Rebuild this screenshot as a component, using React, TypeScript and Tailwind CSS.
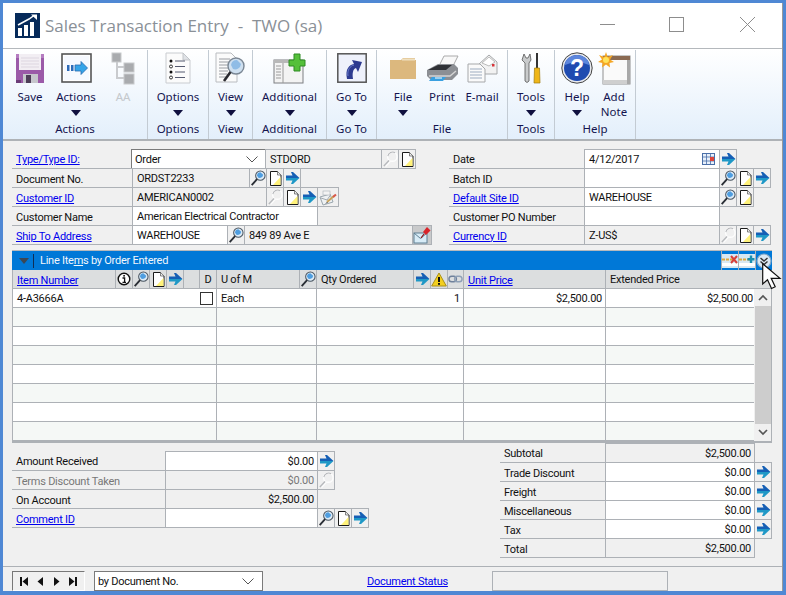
import React from "react";

const FORM = "font-['Roboto',sans-serif] text-[11px] tracking-[-0.25px] leading-none text-[#111]";
const LINE = "border-[#adb1b6]";

function Lookup({ off }: { off?: boolean }) {
  if (off)
    return (
      <svg width="17" height="18" viewBox="0 0 17 18">
        <circle cx="11" cy="6.5" r="5" fill="none" stroke="#fdfdfd" strokeWidth="1.6" />
        <path d="M6.2 6 A5 5 0 0 1 14 2.5" fill="none" stroke="#b4b6b9" strokeWidth="1.1" />
        <path d="M7.5 10.5 L2 16.5" stroke="#b8babd" strokeWidth="1.6" />
        <path d="M8.8 11.5 L3.8 17" stroke="#fdfdfd" strokeWidth="1.2" />
      </svg>
    );
  return (
    <svg width="17" height="18" viewBox="0 0 17 18">
      <circle cx="11" cy="6.5" r="5" fill="#dcebf7" stroke="#4a5560" strokeWidth="1.1" />
      <path d="M7.5 6 A3.6 3.6 0 0 1 11 3 L14 5.5 A3.8 3.8 0 0 1 8.5 8.5Z" fill="#4f9ee0" />
      <path d="M7.5 10.2 L1.8 16.5" stroke="#2a2e35" strokeWidth="2" />
    </svg>
  );
}
function Note() {
  return (
    <svg width="15" height="17" viewBox="0 0 15 17">
      <path d="M2.5 1.5 H9.5 L13 5 V15.5 H2.5Z" fill="#fff" stroke="#1a1a1a" />
      <path d="M12.5 7 V15 H5 Z" fill="#fff27a" />
      <path d="M9.5 1.5 V5 H13" fill="#eee" stroke="#555" strokeWidth=".7" />
    </svg>
  );
}
function Arrow() {
  return (
    <svg width="15" height="14" viewBox="0 0 15 14">
      <path d="M1 4.5 H7.5 L6 1 H8 L14.5 7 H1Z" fill="#155fb5" />
      <path d="M1 7 H14.5 L8 13 H6 L7.5 9.5 H1Z" fill="#1f98c6" />
    </svg>
  );
}
function Info() {
  return (
    <svg width="14" height="14" viewBox="0 0 14 14">
      <circle cx="7" cy="7" r="5.8" fill="#fff" stroke="#111" strokeWidth="1.4" />
      <path d="M5.5 6 H7.6 V10 M5.5 10.3 H9" stroke="#111" strokeWidth="1.3" fill="none" />
      <rect x="6.3" y="3" width="1.6" height="1.6" fill="#111" />
    </svg>
  );
}
function Warn() {
  return (
    <svg width="16" height="15" viewBox="0 0 16 15">
      <path d="M8 1 L15.3 14 H.7Z" fill="#f3cf1f" stroke="#a98f1a" />
      <rect x="7" y="5" width="2" height="5" fill="#111" />
      <rect x="7" y="11" width="2" height="1.8" fill="#111" />
    </svg>
  );
}
function Link() {
  return (
    <svg width="16" height="10" viewBox="0 0 16 10">
      <rect x="1" y="2" width="8" height="6" rx="3" fill="none" stroke="#6f819b" strokeWidth="1.5" />
      <rect x="7" y="2" width="8" height="6" rx="3" fill="none" stroke="#8fa0b6" strokeWidth="1.5" />
    </svg>
  );
}
function Chevron({ up }: { up?: boolean }) {
  return (
    <svg width="10" height="7" viewBox="0 0 10 7">
      <path d={up ? "M1 6 L5 2 L9 6" : "M1 1 L5 5 L9 1"} fill="none" stroke="#555" strokeWidth="1.7" />
    </svg>
  );
}
function ComboChevron() {
  return (
    <svg width="12" height="7" viewBox="0 0 12 7">
      <path d="M.5 .5 L6 6 L11.5 .5" fill="none" stroke="#555" strokeWidth="1" />
    </svg>
  );
}
function Mail() {
  return (
    <svg width="19" height="17" viewBox="0 0 19 17">
      <path d="M1 8 L11 5 L14 13 L4 16Z" fill="#eef1f3" stroke="#9aa6ae" />
      <path d="M2 9 L8 11 L11.5 6" fill="none" stroke="#a3aab0" />
      <rect x="4" y="2" width="7" height="4" fill="#f3f3f3" stroke="#aab2b8" strokeWidth=".6" />
      <path d="M8 13 L15 7" stroke="#c9a35a" strokeWidth="2" />
      <path d="M14 8 L17 5.5" stroke="#d8584c" strokeWidth="2.2" />
      <path d="M7 14.5 L8.5 13" stroke="#444" strokeWidth="1" />
    </svg>
  );
}
function Pin() {
  return (
    <svg width="18" height="19" viewBox="0 0 18 19">
      <rect x="1" y="7" width="13" height="10" fill="#d8ecf7" stroke="#5f7f93" />
      <path d="M1 7 L7.5 12.5 L14 7" fill="none" stroke="#5f7f93" />
      <path d="M10 6 L14 1 L17.5 4.5 L13 9Z" fill="#d9242a" />
      <path d="M11 8 L8 12" stroke="#8a1616" strokeWidth="1.2" />
    </svg>
  );
}

function Cell({ w, bg = "", children, right, dark }: { w: string; bg?: string; children?: React.ReactNode; right?: boolean; dark?: boolean }) {
  return (
    <div
      className={`${w} ${bg} h-[20px] shrink-0 -mr-px border ${dark ? "border-[#7a7a7a]" : LINE} flex items-center overflow-hidden whitespace-nowrap ${
        right ? "justify-end pr-[3px]" : "pl-[4px]"
      }`}
    >
      {children}
    </div>
  );
}
function Btn({ children, w = "w-[18px]", bg = "" }: { children?: React.ReactNode; w?: string; bg?: string }) {
  return (
    <div className={`${w} ${bg} h-[20px] shrink-0 -mr-px border ${LINE} flex items-center justify-center overflow-hidden`}>{children}</div>
  );
}
function Label({ w, children, link, first, muted }: { w: string; children: React.ReactNode; link?: boolean; first?: boolean; muted?: boolean }) {
  return (
    <div
      className={`${w} h-[20px] shrink-0 ${first ? "border-b" : "border-y"} ${LINE} flex items-center pl-[4px] pt-[2px] whitespace-nowrap ${
        muted ? "text-[#777]" : ""
      }`}
    >
      {link ? <span className="text-[#0000ee] underline">{children}</span> : children}
    </div>
  );
}
const Row = ({ children }: { children: React.ReactNode }) => <div className="flex h-[19px]">{children}</div>;

function RibbonBtn({ w, label, label2, arrow, icon, muted }: { w: string; label: string; label2?: string; arrow?: boolean; icon: React.ReactNode; muted?: boolean }) {
  return (
    <div className={`${w} shrink-0 flex flex-col items-center`}>
      <div className="h-[36px] w-full flex items-center justify-center">{icon}</div>
      <div className={`h-[16px] mt-[3px] leading-[16px] whitespace-nowrap ${muted ? "text-[#c4c8cc]" : ""}`}>{label}</div>
      {label2 && <div className="h-[15px] -mt-[1px] leading-[15px] whitespace-nowrap">{label2}</div>}
      {arrow && (
        <svg className="mt-[5px]" width="10" height="6" viewBox="0 0 10 6">
          <path d="M0 0 H10 L5 6Z" fill="#10103f" />
        </svg>
      )}
    </div>
  );
}
function Group({ w, label, children, pad = "" }: { w: string; label: string; children: React.ReactNode; pad?: string }) {
  return (
    <div className={`${w} shrink-0 h-full border-r border-[#c3cbd3] flex flex-col`}>
      <div className={`h-[71px] flex justify-center ${pad}`}>{children}</div>
      <div className="text-center leading-[16px]">{label}</div>
    </div>
  );
}

const SaveIcon = (
  <svg width="30" height="31" viewBox="0 0 30 31">
    <path d="M1 1 H29 V30 H1Z" fill="#9b5aa8" />
    <rect x="1" y="1" width="28" height="4" fill="#b57cc0" />
    <rect x="4" y="1" width="22" height="16" fill="#f2eef3" />
    <path d="M6 5 H24 M6 8 H24 M6 11 H24 M6 14 H24" stroke="#ddd6e0" />
    <rect x="8" y="21" width="15" height="9" fill="#c6c6cc" />
    <rect x="11" y="22" width="5" height="8" fill="#4d3d57" />
    <rect x="1" y="27" width="5" height="3" fill="#6c3d78" />
  </svg>
);
const ActionsIcon = (
  <svg width="31" height="30" viewBox="0 0 31 30">
    <rect x="1" y="1" width="29" height="28" fill="#fff" stroke="#555" strokeWidth="1.6" />
    <rect x="3" y="3" width="25" height="24" fill="#f6f9ff" />
    <path d="M6 12 H8.5 V18 H6Z M10 12 H12.5 V18 H10Z" fill="#2d6bb8" />
    <path d="M14 12 H20 V8.5 L26.5 15 L20 21.5 V18 H14Z" fill="#35a4e8" stroke="#2a6ab0" strokeWidth=".8" />
  </svg>
);
const AAIcon = (
  <svg width="24" height="33" viewBox="0 0 24 33">
    <path d="M6 8 V26 H14 M6 15 H14" stroke="#c9cbce" strokeWidth="2" fill="none" />
    <rect x="1" y="1" width="9" height="9" fill="#a9abae" stroke="#c8cacc" />
    <rect x="13" y="11" width="10" height="9" fill="#a9abae" stroke="#c8cacc" />
    <rect x="13" y="22" width="10" height="10" fill="#a9abae" stroke="#c8cacc" />
  </svg>
);
const OptionsIcon = (
  <svg width="26" height="32" viewBox="0 0 26 32">
    <path d="M1 1 H18 L25 8 V31 H1Z" fill="#fbfbfb" stroke="#c9ccd0" />
    <path d="M18 1 V8 H25Z" fill="#dfe2e6" stroke="#c2c5c9" />
    <circle cx="6" cy="9" r="1.5" fill="#111" />
    <circle cx="6" cy="14.5" r="1.5" fill="none" stroke="#333" />
    <circle cx="6" cy="20" r="1.5" fill="#111" />
    <circle cx="6" cy="25.5" r="1.5" fill="none" stroke="#333" />
    <path d="M10 9 H20 M10 14.5 H20 M10 20 H20 M10 25.5 H20" stroke="#555a70" strokeWidth="1" />
  </svg>
);
const ViewIcon = (
  <svg width="32" height="33" viewBox="0 0 32 33">
    <path d="M1 1 H16 L22 7 V30 H1Z" fill="#fbfbfb" stroke="#b9bcc0" />
    <path d="M4 7 H15 M4 10 H18 M4 13 H14 M4 16 H13 M4 19 H13 M4 22 H12 M4 25 H12" stroke="#9a9da2" />
    <circle cx="21" cy="14" r="8" fill="#cfe0f0" stroke="#7b8794" strokeWidth="1.4" />
    <path d="M16 13 A6 6 0 0 1 22 8 L26 12 A6 6 0 0 1 18 17Z" fill="#8fbce6" />
    <path d="M15.5 20 L9 29" stroke="#2a2a30" strokeWidth="2.6" />
  </svg>
);
const AdditionalIcon = (
  <svg width="33" height="31" viewBox="0 0 33 31">
    <rect x="1" y="7" width="29" height="23" fill="#f3f3f3" stroke="#7d7f82" />
    <rect x="1" y="7" width="29" height="3" fill="#b8b8b8" />
    <path d="M10 10 V30" stroke="#999" />
    <path d="M3 13 H8 M3 16 H8 M3 19 H8 M3 22 H8 M3 25 H8" stroke="#9b9b9b" />
    <path d="M21 1 H27 V7 H32 V13 H27 V18 H21 V13 H16 V7 H21Z" fill="#55c03a" stroke="#2e8a22" />
  </svg>
);
const GoToIcon = (
  <svg width="30" height="30" viewBox="0 0 30 30">
    <rect x=".8" y=".8" width="28.4" height="28.4" fill="#eef1fb" stroke="#555" strokeWidth="1.5" />
    <path d="M10 26 C8 16 12 12 17 11 L15 7 L25 9 L21 19 L19 15 C16 16 15 20 16 26Z" fill="#2d3a90" />
    <path d="M11 23 C10 17 13 13 17 12" stroke="#6a7ccc" fill="none" />
  </svg>
);
const FileIcon = (
  <svg width="28" height="23" viewBox="0 0 28 23">
    <path d="M1 3 H12 L14 1 H26 V3 H27 V22 H1Z" fill="#dcb87e" />
    <rect x="13" y="1.5" width="13" height="2" fill="#efe0c0" />
  </svg>
);
const PrintIcon = (
  <svg width="33" height="27" viewBox="0 0 33 27">
    <path d="M18 1 H32 L26 13 H12Z" fill="#f8f8f8" stroke="#aaa" />
    <path d="M1 15 L12 9 H28 L32 13 V19 L26 25 H5 L1 21Z" fill="#8c8f94" />
    <path d="M2 15 L12 10 H26 L20 15Z" fill="#2f3136" />
    <path d="M3 21 L24 21 L30 16" stroke="#d4d4d4" fill="none" strokeWidth="1.5" />
    <path d="M6 22 H20 L17 26 H3Z" fill="#3aa0e0" />
    <path d="M9 23 H16" stroke="#fff" />
  </svg>
);
const EmailIcon = (
  <svg width="31" height="29" viewBox="0 0 31 29">
    <path d="M12 10 L22 1 L30 8 V20 H12Z" fill="#f2f2f2" stroke="#a6a8aa" />
    <path d="M15 9 L22 3 L28 8 L22 12Z" fill="#fff" stroke="#bbb" />
    <rect x="25" y="10" width="2.5" height="2.5" fill="#d8343a" />
    <path d="M1 10 H13 L18 15 V28 H1Z" fill="#fafafa" stroke="#a6a8aa" />
    <path d="M3 15 H15 M3 18 H15 M3 21 H15 M3 24 H15" stroke="#9dacc0" />
  </svg>
);
const ToolsIcon = (
  <svg width="21" height="31" viewBox="0 0 21 31">
    <path d="M3 1 L1 7 L4 10 L4 28 Q6 31 8 28 L8 10 L10 7 L9 1 L7 5 L5 5Z" fill="#c9cbcc" stroke="#555" strokeWidth=".8" />
    <rect x="15" y="0" width="2" height="15" fill="#333" />
    <path d="M13.5 15 H18.5 L19 30 H13Z" fill="#efb618" stroke="#9e7a0e" strokeWidth=".7" />
  </svg>
);
const HelpIcon = (
  <svg width="32" height="32" viewBox="0 0 32 32">
    <circle cx="16" cy="16" r="15.2" fill="#e7e9ee" stroke="#444" strokeWidth="1" />
    <circle cx="16" cy="16" r="13" fill="#1f4bb0" />
    <path d="M4 13 A12 10 0 0 1 28 13 A20 14 0 0 0 4 13Z" fill="#5d86dc" />
    <text x="16" y="24" textAnchor="middle" fontFamily="Liberation Sans" fontWeight="700" fontSize="23" fill="#fff">?</text>
  </svg>
);
const NoteIcon = (
  <svg width="33" height="33" viewBox="0 0 33 33">
    <rect x="5" y="4" width="27" height="28" fill="#fafafa" stroke="#8f8f8f" />
    <rect x="5" y="4" width="27" height="4" fill="#8a6a52" />
    <rect x="5" y="28" width="27" height="4" fill="#cfcfcf" />
    <rect x="29" y="8" width="3" height="24" fill="#a9a9a9" />
    <path d="M8 0 L9.7 5 L15 3 L12 7.6 L16 10 L11.5 11 L12 15.5 L8 12.5 L4 15.5 L4.5 11 L0 10 L4 7.6 L1 3 L6.3 5Z" fill="#f5a623" />
    <circle cx="8" cy="8" r="3" fill="#ffe35a" />
  </svg>
);
const LogoIcon = (
  <svg width="25" height="25" viewBox="0 0 25 25">
    <rect width="25" height="25" fill="#062a5a" />
    <path d="M3 12 L14 6 L19 2.5" stroke="#fff" strokeWidth="1.5" fill="none" />
    <path d="M16 1.5 H22 V7Z" fill="#fff" />
    <rect x="3" y="15" width="4" height="8" fill="#fff" />
    <rect x="9" y="12" width="4" height="11" fill="#fff" />
    <rect x="15" y="9" width="4" height="14" fill="#fff" />
  </svg>
);

function BarIcon({ kind }: { kind: "x" | "plus" | "check" }) {
  if (kind === "check")
    return (
      <svg width="16" height="16" viewBox="0 0 16 16">
        <circle cx="8" cy="8" r="7" fill="#dce9f3" stroke="#7ea6c8" strokeWidth="1.2" />
        <path d="M4.5 5 L8 8 L11.5 5 M4.5 8.5 L8 11.5 L11.5 8.5" stroke="#333" strokeWidth="1.4" fill="none" />
      </svg>
    );
  return (
    <svg width="16" height="15" viewBox="0 0 16 15">
      <rect x="0" y="1" width="16" height="14" fill="#d8e8f2" />
      <rect x="0" y="10" width="16" height="3" fill="#fff" />
      <path d="M0 6.5 H11" stroke="#e0a83a" strokeWidth="2" strokeDasharray="3 1" />
      {kind === "x" ? (
        <path d="M9 3 L15 10 M15 3 L9 10" stroke="#d8403a" strokeWidth="2" />
      ) : (
        <path d="M12 2.5 V10 M8.5 6.3 H15.5" stroke="#1a8fb0" strokeWidth="2.4" />
      )}
    </svg>
  );
}

function GridRow({ i, children }: { i: number; children?: React.ReactNode[] }) {
  const c = children ?? [null, null, null, null, null];
  const bg = i % 2 === 0 ? "bg-white" : "bg-[#f5f8f6]";
  const cell = `h-full border-b border-r ${LINE} flex items-center shrink-0`;
  return (
    <div className={`flex h-[19px] ${bg}`}>
      <div className={`w-[205px] border-l pl-[4px] pr-[10px] justify-between ${cell}`}>{c[0]}</div>
      <div className={`w-[100px] pl-[4px] ${cell}`}>{c[1]}</div>
      <div className={`w-[147px] pr-[3px] justify-end ${cell}`}>{c[2]}</div>
      <div className={`w-[142px] pr-[3px] justify-end ${cell}`}>{c[3]}</div>
      <div className={`w-[148px] pr-[1px] justify-end border-b ${LINE} h-full flex items-center shrink-0`}>{c[4]}</div>
    </div>
  );
}
function HeadCell({ w, children, center }: { w: string; children?: React.ReactNode; center?: boolean }) {
  return (
    <div className={`${w} h-full shrink-0 border-r border-b ${LINE} flex items-center whitespace-nowrap ${center ? "justify-center" : "pl-[4px]"}`}>
      {children}
    </div>
  );
}
const Hyper = ({ children }: { children: React.ReactNode }) => <span className="text-[#0000ee] underline mt-[2px]">{children}</span>;

function NavGlyph({ d }: { d: string }) {
  return (
    <svg width="11" height="11" viewBox="0 0 11 11">
      <path d={d} fill="#111" />
    </svg>
  );
}

export default function App() {
  return (
    <div className="relative w-[786px] h-[595px] overflow-hidden bg-[#4f88d4] pt-[3px] pl-[3px]">
      <div className="w-[780px] h-[588px] bg-[#f0f0f0] flex flex-col border-r border-[#9a9a9a]">
        {/* Title bar */}
        <div className="h-[46px] shrink-0 bg-white border-b border-[#b4b8bc] flex items-center pl-[12px] pb-[2px]">
          <div className="mr-[5px] mt-[1px] flex">{LogoIcon}</div>
          <span className="font-['Open_Sans',sans-serif] text-[17px] text-[#8a9097] whitespace-pre mt-[2px]">Sales Transaction Entry  -  TWO (sa)</span>
          <div className="ml-auto flex items-center">
            <div className="w-[15px] h-px bg-[#8d8d8d] mr-[54px]" />
            <div className="w-[15px] h-[15px] border border-[#8d8d8d] mr-[56px]" />
            <svg className="mr-[27px]" width="15" height="15" viewBox="0 0 15 15">
              <path d="M0 0 L15 15 M15 0 L0 15" stroke="#8d8d8d" strokeWidth="1" />
            </svg>
          </div>
        </div>

        {/* Ribbon */}
        <div className="h-[92px] shrink-0 border-b-2 border-[#aeb2b6] bg-gradient-to-b from-white to-[#e3effb] flex font-['Noto_Sans',sans-serif] text-[11.5px] text-[#14144f] pt-[1px]">
          <Group w="w-[145px]" label="Actions" pad="pl-[7px] !justify-start">
            <RibbonBtn w="w-[40px]" label="Save" icon={SaveIcon} />
            <RibbonBtn w="w-[52px]" label="Actions" arrow icon={ActionsIcon} />
            <RibbonBtn w="w-[42px]" label="AA" muted icon={AAIcon} />
          </Group>
          <Group w="w-[61px]" label="Options">
            <RibbonBtn w="w-[60px]" label="Options" arrow icon={OptionsIcon} />
          </Group>
          <Group w="w-[44px]" label="View">
            <RibbonBtn w="w-[43px]" label="View" arrow icon={ViewIcon} />
          </Group>
          <Group w="w-[74px]" label="Additional">
            <RibbonBtn w="w-[73px]" label="Additional" arrow icon={AdditionalIcon} />
          </Group>
          <Group w="w-[50px]" label="Go To">
            <RibbonBtn w="w-[49px]" label="Go To" arrow icon={GoToIcon} />
          </Group>
          <Group w="w-[131px]" label="File" pad="pl-[6px] !justify-start">
            <RibbonBtn w="w-[40px]" label="File" arrow icon={FileIcon} />
            <RibbonBtn w="w-[38px]" label="Print" icon={PrintIcon} />
            <RibbonBtn w="w-[42px]" label="E-mail" icon={EmailIcon} />
          </Group>
          <Group w="w-[47px]" label="Tools">
            <RibbonBtn w="w-[46px]" label="Tools" arrow icon={ToolsIcon} />
          </Group>
          <Group w="w-[81px]" label="Help" pad="pl-[2px] !justify-start">
            <RibbonBtn w="w-[40px]" label="Help" arrow icon={HelpIcon} />
            <RibbonBtn w="w-[34px]" label="Add" label2="Note" icon={NoteIcon} />
          </Group>
        </div>

        {/* Top form */}
        <div className={`${FORM} flex pl-[9px] pt-[8px] shrink-0`}>
          <div className="w-[437px] shrink-0">
            <Row>
              <Label w="w-[120px]" link first>Type/Type ID:</Label>
              <Cell w="w-[135px] -ml-px" bg="bg-white" dark>
                <span className="flex-1 -ml-[1px]">Order</span>
                <span className="mr-[7px] flex"><ComboChevron /></span>
              </Cell>
              <Cell w="w-[117px]">STDORD</Cell>
              <Btn><Lookup off /></Btn>
              <Btn><Note /></Btn>
            </Row>
            <Row>
              <Label w="w-[120px]">Document No.</Label>
              <Cell w="w-[118px]">ORDST2233</Cell>
              <Btn><Lookup /></Btn>
              <Btn><Note /></Btn>
              <Btn><Arrow /></Btn>
            </Row>
            <Row>
              <Label w="w-[120px]" link>Customer ID</Label>
              <Cell w="w-[135px]">AMERICAN0002</Cell>
              <Btn><Lookup off /></Btn>
              <Btn><Note /></Btn>
              <Btn><Arrow /></Btn>
              <Btn w="w-[22px]"><Mail /></Btn>
            </Row>
            <Row>
              <Label w="w-[120px]">Customer Name</Label>
              <Cell w="w-[186px]" bg="bg-white">American Electrical Contractor</Cell>
            </Row>
            <Row>
              <Label w="w-[120px]" link>Ship To Address</Label>
              <Cell w="w-[96px]" bg="bg-white">WAREHOUSE</Cell>
              <Btn><Lookup /></Btn>
              <Cell w="w-[169px]">849 89 Ave E</Cell>
              <Btn w="w-[20px]" bg="bg-[#c9cacb]"><Pin /></Btn>
            </Row>
          </div>
          <div className="w-[323px] shrink-0">
            <Row>
              <Label w="w-[136px]" first>Date</Label>
              <Cell w="w-[136px] -ml-px" bg="bg-white">
                <span className="flex-1">4/12/2017</span>
                <svg className="mr-[4px]" width="13" height="12" viewBox="0 0 13 12">
                  <rect x=".5" y=".5" width="12" height="11" fill="#e8f0fa" stroke="#4a6fa8" />
                  <path d="M4.5 0 V12 M8.5 0 V12 M0 4 H13 M0 8 H13" stroke="#4a6fa8" strokeWidth=".8" />
                  <rect x="8" y="4" width="4" height="4" fill="#e0443a" />
                </svg>
              </Cell>
              <Btn><Arrow /></Btn>
            </Row>
            <Row>
              <Label w="w-[136px]">Batch ID</Label>
              <Cell w="w-[136px] -ml-px" bg="bg-white" />
              <Btn><Lookup /></Btn>
              <Btn><Note /></Btn>
              <Btn><Arrow /></Btn>
            </Row>
            <Row>
              <Label w="w-[136px]" link>Default Site ID</Label>
              <Cell w="w-[136px] -ml-px" bg="bg-white">WAREHOUSE</Cell>
              <Btn><Lookup /></Btn>
              <Btn><Note /></Btn>
            </Row>
            <Row>
              <Label w="w-[136px]">Customer PO Number</Label>
              <Cell w="w-[136px] -ml-px" bg="bg-white" />
            </Row>
            <Row>
              <Label w="w-[136px]" link>Currency ID</Label>
              <Cell w="w-[136px] -ml-px">Z-US$</Cell>
              <Btn><Lookup off /></Btn>
              <Btn><Note /></Btn>
              <Btn><Arrow /></Btn>
            </Row>
          </div>
        </div>

        {/* Line items */}
        <div className={`${FORM} ml-[9px] mt-[6px] w-[760px] shrink-0`}>
          <div className="h-[20px] bg-[#0078d7] border-t border-[#b5b9bd] flex items-center text-[#f2f7fc]">
            <svg className="ml-[7px]" width="10" height="6" viewBox="0 0 10 6">
              <path d="M0 0 H10 L5 6Z" fill="#3b4754" />
            </svg>
            <div className="w-px h-[14px] bg-[#0f2f55] ml-[4px] mr-[6px]" />
            <span>
              Line Ite<span className="underline">m</span>s by Order Entered
            </span>
            <div className="ml-auto flex h-full">
              {(["x", "plus", "check"] as const).map((k) => (
                <div key={k} className={`w-[17px] h-full border-l ${LINE} flex items-center justify-center`}>
                  <BarIcon kind={k} />
                </div>
              ))}
            </div>
          </div>
          <div className="flex h-[19px] bg-[#dcdedf]">
            <HeadCell w="w-[104px] border-l"><Hyper>Item Number</Hyper></HeadCell>
            <HeadCell w="w-[17px]" center><Info /></HeadCell>
            <HeadCell w="w-[17px]" center><Lookup /></HeadCell>
            <HeadCell w="w-[17px]" center><Note /></HeadCell>
            <HeadCell w="w-[17px]" center><Arrow /></HeadCell>
            <HeadCell w="w-[16px]" />
            <HeadCell w="w-[17px]" center>D</HeadCell>
            <HeadCell w="w-[83px]">U of M</HeadCell>
            <HeadCell w="w-[17px]" center><Lookup /></HeadCell>
            <HeadCell w="w-[97px]">Qty Ordered</HeadCell>
            <HeadCell w="w-[17px]" center><Arrow /></HeadCell>
            <HeadCell w="w-[17px]" center><Warn /></HeadCell>
            <HeadCell w="w-[16px]" center><Link /></HeadCell>
            <HeadCell w="w-[142px]"><Hyper>Unit Price</Hyper></HeadCell>
            <HeadCell w="w-[166px]">Extended Price</HeadCell>
          </div>
          <div className={`flex border-b-2 ${LINE}`}>
            <div className="w-[742px] shrink-0">
              <GridRow i={0}>
                {[
                  <React.Fragment key="a">
                    <span>4-A3666A</span>
                    <span className="w-[13px] h-[13px] border border-[#333] bg-white -mr-[7px]" />
                  </React.Fragment>,
                  "Each",
                  "1",
                  "$2,500.00",
                  "$2,500.00",
                ]}
              </GridRow>
              {[1, 2, 3, 4, 5, 6, 7].map((i) => (
                <GridRow key={i} i={i} />
              ))}
            </div>
            <div className="w-[18px] shrink-0 bg-[#f0f0f0] border-r border-[#adb1b6] flex flex-col items-center">
              <div className="h-[17px] w-full flex items-center justify-center"><Chevron up /></div>
              <div className="w-[16px] h-[118px] bg-[#cdcdcd]" />
              <div className="flex-1 flex items-center justify-center"><Chevron /></div>
            </div>
          </div>
        </div>

        {/* Bottom section */}
        <div className={`${FORM} flex pl-[9px] shrink-0 h-[123px]`}>
          <div className="w-[488px] shrink-0 pt-[8px]">
            <Row>
              <Label w="w-[154px]" first>Amount Received</Label>
              <Cell w="w-[153px] -ml-px" bg="bg-white" right>$0.00</Cell>
              <Btn><Arrow /></Btn>
            </Row>
            <Row>
              <Label w="w-[154px]" muted>Terms Discount Taken</Label>
              <Cell w="w-[153px] -ml-px" right><span className="text-[#777]">$0.00</span></Cell>
              <Btn><Lookup off /></Btn>
            </Row>
            <Row>
              <Label w="w-[154px]">On Account</Label>
              <Cell w="w-[153px] -ml-px" right>$2,500.00</Cell>
            </Row>
            <Row>
              <Label w="w-[154px]" link>Comment ID</Label>
              <Cell w="w-[153px] -ml-px" bg="bg-white" />
              <Btn><Lookup /></Btn>
              <Btn><Note /></Btn>
              <Btn><Arrow /></Btn>
            </Row>
          </div>
          <div className="w-[272px] shrink-0">
            <Row>
              <Label w="w-[106px]" first>Subtotal</Label>
              <Cell w="w-[150px] -ml-px" right>$2,500.00</Cell>
            </Row>
            {["Trade Discount", "Freight", "Miscellaneous", "Tax"].map((t) => (
              <Row key={t}>
                <Label w="w-[106px]">{t}</Label>
                <Cell w="w-[150px] -ml-px" bg="bg-white" right>$0.00</Cell>
                <Btn><Arrow /></Btn>
              </Row>
            ))}
            <Row>
              <Label w="w-[106px]">Total</Label>
              <Cell w="w-[150px] -ml-px" right>$2,500.00</Cell>
            </Row>
          </div>
        </div>

        {/* Footer */}
        <div className={`${FORM} flex-1 border-t ${LINE} flex items-start pl-[9px] pt-[4px]`}>
          <div className="w-[73px] h-[20px] border-l border-t border-[#777] border-r-white border-b-white border-r border-b flex items-center justify-around px-[3px] shrink-0">
            <NavGlyph d="M1 1 H3 V10 H1Z M9 1 V10 L3.5 5.5Z" />
            <NavGlyph d="M8 1 V10 L2.5 5.5Z" />
            <NavGlyph d="M3 1 V10 L8.5 5.5Z" />
            <NavGlyph d="M2 1 V10 L7.5 5.5Z M8 1 H10 V10 H8Z" />
          </div>
          <div className="ml-[9px] w-[169px] h-[20px] border border-[#7a7a7a] bg-white flex items-center pl-[3px] shrink-0">
            <span className="flex-1">by Document No.</span>
            <span className="mr-[8px] flex"><ComboChevron /></span>
          </div>
          <span className="ml-[104px] mt-[5px] text-[#0000ee] underline whitespace-nowrap w-[125px] shrink-0">Document Status</span>
          <div className={`w-[176px] h-[20px] border ${LINE} shrink-0`} />
        </div>
      </div>

      {/* Mouse pointer */}
      <svg className="absolute left-[762px] top-[263px]" width="20" height="27" viewBox="0 0 20 27">
        <path d="M.7 .7 V21 L5.5 16.8 L9.5 25.5 L13.2 23.8 L9.2 15.3 L18 15.3Z" fill="#fff" stroke="#111" strokeWidth="1.2" />
      </svg>
    </div>
  );
}
